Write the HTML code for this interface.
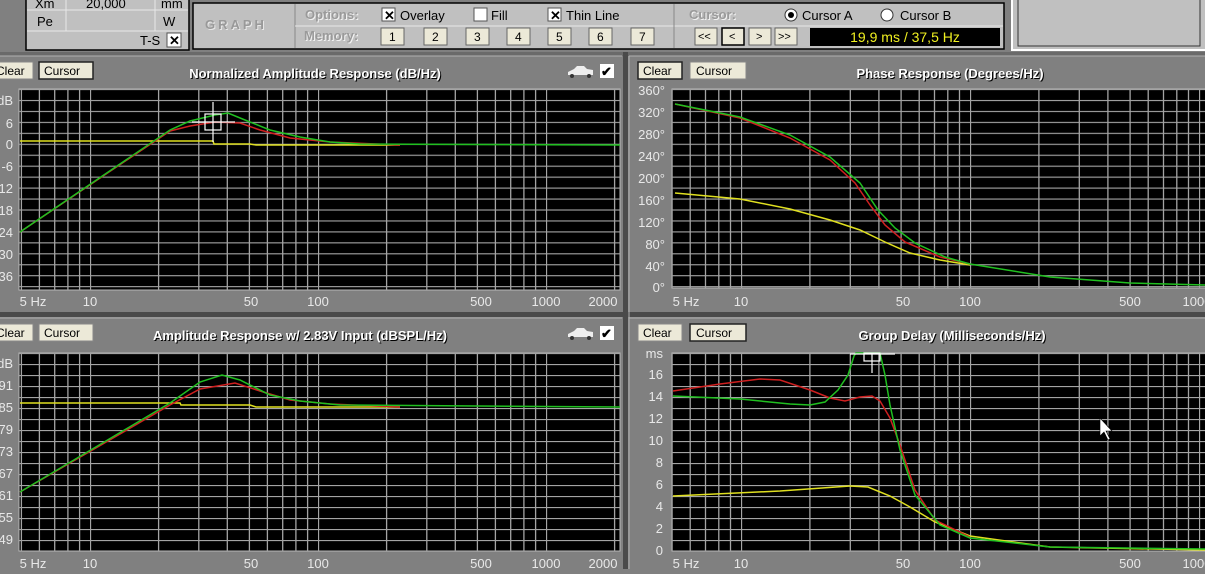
<!DOCTYPE html>
<html><head><meta charset="utf-8"><style>
body{margin:0;width:1205px;height:569px;overflow:hidden;background:#808080;font-family:"Liberation Sans",sans-serif}
</style></head><body>
<svg width="1205" height="569" xmlns="http://www.w3.org/2000/svg" font-family="Liberation Sans, sans-serif">
<defs>
<pattern id="gl" x="90" y="0" width="228" height="569" patternUnits="userSpaceOnUse">
<g stroke="#a4a4a4" stroke-width="1.3">
<line x1="0.5" y1="0" x2="0.5" y2="569"/><line x1="68.6" y1="0" x2="68.6" y2="569"/><line x1="108.8" y1="0" x2="108.8" y2="569"/><line x1="137.3" y1="0" x2="137.3" y2="569"/><line x1="159.4" y1="0" x2="159.4" y2="569"/><line x1="177.4" y1="0" x2="177.4" y2="569"/><line x1="192.7" y1="0" x2="192.7" y2="569"/><line x1="205.9" y1="0" x2="205.9" y2="569"/><line x1="217.6" y1="0" x2="217.6" y2="569"/></g></pattern>
<pattern id="gr" x="741" y="0" width="229" height="569" patternUnits="userSpaceOnUse">
<g stroke="#a4a4a4" stroke-width="1.3">
<line x1="0.5" y1="0" x2="0.5" y2="569"/><line x1="68.9" y1="0" x2="68.9" y2="569"/><line x1="109.3" y1="0" x2="109.3" y2="569"/><line x1="137.9" y1="0" x2="137.9" y2="569"/><line x1="160.1" y1="0" x2="160.1" y2="569"/><line x1="178.2" y1="0" x2="178.2" y2="569"/><line x1="193.5" y1="0" x2="193.5" y2="569"/><line x1="206.8" y1="0" x2="206.8" y2="569"/><line x1="218.5" y1="0" x2="218.5" y2="569"/></g></pattern>
<pattern id="h1" x="0" y="89" width="1205" height="10.95" patternUnits="userSpaceOnUse"><line x1="0" y1="0.5" x2="1205" y2="0.5" stroke="#a4a4a4" stroke-width="1.3"/></pattern>
<pattern id="h2" x="0" y="353" width="1205" height="11" patternUnits="userSpaceOnUse"><line x1="0" y1="0.5" x2="1205" y2="0.5" stroke="#a4a4a4" stroke-width="1.3"/></pattern>
</defs>

<!-- toolbar -->
<rect x="0" y="0" width="1205" height="52" fill="#808080"/>
<rect x="26" y="-2" width="163" height="52" fill="#c0c0c0" stroke="#000" stroke-width="1.5"/>
<g stroke="#e8e8e8" stroke-width="1"><line x1="27" y1="10" x2="188" y2="10"/><line x1="27" y1="31" x2="188" y2="31"/><line x1="66" y1="0" x2="66" y2="31"/><line x1="155" y1="0" x2="155" y2="31"/></g>
<g font-size="13" fill="#000"><text x="35" y="8">Xm</text><text x="86" y="8">20,000</text><text x="161" y="8">mm</text><text x="37" y="26">Pe</text><text x="163" y="26">W</text><text x="140" y="45">T-S</text></g>
<rect x="167" y="33" width="14" height="14" fill="#fff" stroke="#555"/><text x="169" y="45" font-size="13" font-weight="bold">✕</text>
<rect x="193" y="3" width="811" height="46" fill="#c0c0c0" stroke="#000" stroke-width="1.5"/>
<line x1="295" y1="4" x2="295" y2="48" stroke="#888"/><line x1="295" y1="26" x2="1003" y2="26" stroke="#e8e8e8"/>
<line x1="674" y1="4" x2="674" y2="48" stroke="#888"/>
<text x="206" y="30" font-size="13" font-weight="bold" fill="#e8e8e8" letter-spacing="3">GRAPH</text>
<text x="205" y="29" font-size="13" font-weight="bold" fill="#999" letter-spacing="3">GRAPH</text>
<g font-size="13" font-weight="bold" fill="#f2f2f2"><text x="306" y="20">Options:</text><text x="305" y="41">Memory:</text><text x="690" y="20">Cursor:</text></g>
<g font-size="13" font-weight="bold" fill="#9a9a9a"><text x="305" y="19">Options:</text><text x="304" y="40">Memory:</text><text x="689" y="19">Cursor:</text></g>
<g font-size="13" fill="#000">
<rect x="382" y="8" width="13" height="13" fill="#fff" stroke="#555"/><text x="384" y="20" font-weight="bold">✕</text><text x="400" y="20">Overlay</text>
<rect x="474" y="8" width="13" height="13" fill="#fff" stroke="#555"/><text x="491" y="20">Fill</text>
<rect x="548" y="8" width="13" height="13" fill="#fff" stroke="#555"/><text x="550" y="20" font-weight="bold">✕</text><text x="566" y="20">Thin Line</text>
<circle cx="791" cy="15" r="6" fill="#fff" stroke="#333"/><circle cx="791" cy="15" r="3" fill="#000"/><text x="802" y="20">Cursor A</text>
<circle cx="887" cy="15" r="6" fill="#fff" stroke="#333"/><text x="900" y="20">Cursor B</text>
</g>
<g font-size="12" fill="#000">
<rect x="381" y="28" width="23" height="17" fill="#ece9d8" stroke="#666"/><text x="389" y="41">1</text>
<rect x="424" y="28" width="23" height="17" fill="#ece9d8" stroke="#666"/><text x="432" y="41">2</text>
<rect x="466" y="28" width="23" height="17" fill="#ece9d8" stroke="#666"/><text x="474" y="41">3</text>
<rect x="507" y="28" width="23" height="17" fill="#ece9d8" stroke="#666"/><text x="515" y="41">4</text>
<rect x="548" y="28" width="23" height="17" fill="#ece9d8" stroke="#666"/><text x="556" y="41">5</text>
<rect x="589" y="28" width="23" height="17" fill="#ece9d8" stroke="#666"/><text x="597" y="41">6</text>
<rect x="631" y="28" width="23" height="17" fill="#ece9d8" stroke="#666"/><text x="639" y="41">7</text>
<rect x="695" y="28" width="22" height="17" fill="#ece9d8" stroke="#666"/><text x="698" y="40" font-size="11">&lt;&lt;</text>
<rect x="722" y="28" width="22" height="17" fill="#ece9d8" stroke="#000" stroke-width="1.5"/><text x="729" y="40" font-size="11">&lt;</text>
<rect x="749" y="28" width="22" height="17" fill="#ece9d8" stroke="#666"/><text x="756" y="40" font-size="11">&gt;</text>
<rect x="775" y="28" width="22" height="17" fill="#ece9d8" stroke="#666"/><text x="778" y="40" font-size="11">&gt;&gt;</text>
</g>
<rect x="810" y="28" width="190" height="18" fill="#000"/>
<text x="905" y="42" font-size="14" fill="#f0f020" text-anchor="middle">19,9 ms / 37,5 Hz</text>
<rect x="1012" y="-2" width="194" height="52" fill="#c0c0c0" stroke="#fff" stroke-width="2"/>
<rect x="1018" y="-2" width="182" height="48" fill="#c0c0c0" stroke="#333"/>

<!-- panel frames -->
<rect x="0" y="52" width="1205" height="4" fill="#6a6a6a"/>
<rect x="623" y="52" width="5" height="517" fill="#4a4a4a"/>
<rect x="0" y="312" width="1205" height="5" fill="#4a4a4a"/>
<line x1="0" y1="56" x2="622" y2="56" stroke="#b0b0b0"/><line x1="629" y1="56" x2="1205" y2="56" stroke="#b0b0b0"/>
<line x1="0" y1="318" x2="622" y2="318" stroke="#b0b0b0"/><line x1="629" y1="318" x2="1205" y2="318" stroke="#b0b0b0"/>
<line x1="629" y1="56" x2="629" y2="569" stroke="#b0b0b0"/>

<!-- plot backgrounds -->
<rect x="19" y="89" width="601" height="201" fill="#000" stroke="#b8b8b8"/>
<rect x="19" y="89" width="601" height="201" fill="url(#gl)"/><rect x="19" y="89" width="601" height="201" fill="url(#h1)"/>
<rect x="19" y="353" width="601" height="198" fill="#000" stroke="#b8b8b8"/>
<rect x="19" y="353" width="601" height="198" fill="url(#gl)"/><rect x="19" y="353" width="601" height="198" fill="url(#h2)"/>
<rect x="672" y="89" width="540" height="199" fill="#000" stroke="#b8b8b8"/>
<rect x="672" y="89" width="533" height="199" fill="url(#gr)"/><rect x="672" y="89" width="533" height="199" fill="url(#h1)"/>
<rect x="672" y="353" width="540" height="198" fill="#000" stroke="#b8b8b8"/>
<rect x="672" y="353" width="533" height="198" fill="url(#gr)"/><rect x="672" y="353" width="533" height="198" fill="url(#h2)"/>

<!-- headers -->
<g font-size="12" fill="#000">
<rect x="-6" y="62" width="39" height="17" fill="#ece9d8" stroke="#888"/><text x="-4" y="75">Clear</text>
<rect x="39" y="62" width="54" height="17" fill="#ece9d8" stroke="#222" stroke-width="1.5"/><text x="44" y="75">Cursor</text>
<rect x="638" y="62" width="44" height="17" fill="#ece9d8" stroke="#222" stroke-width="1.5"/><text x="643" y="75">Clear</text>
<rect x="690" y="62" width="56" height="17" fill="#ece9d8" stroke="#888"/><text x="696" y="75">Cursor</text>
<rect x="-6" y="324" width="39" height="17" fill="#ece9d8" stroke="#888"/><text x="-4" y="337">Clear</text>
<rect x="39" y="324" width="54" height="17" fill="#ece9d8" stroke="#888"/><text x="44" y="337">Cursor</text>
<rect x="638" y="324" width="44" height="17" fill="#ece9d8" stroke="#888"/><text x="643" y="337">Clear</text>
<rect x="690" y="324" width="56" height="17" fill="#ece9d8" stroke="#222" stroke-width="1.5"/><text x="696" y="337">Cursor</text>
</g>
<g font-size="13" font-weight="bold" text-anchor="middle">
<g fill="#000" transform="translate(1,1)"><text x="315" y="78">Normalized Amplitude Response (dB/Hz)</text><text x="950" y="78">Phase Response (Degrees/Hz)</text><text x="300" y="340">Amplitude Response w/ 2.83V Input (dBSPL/Hz)</text><text x="952" y="340">Group Delay (Milliseconds/Hz)</text></g>
<g fill="#fff"><text x="315" y="78">Normalized Amplitude Response (dB/Hz)</text><text x="950" y="78">Phase Response (Degrees/Hz)</text><text x="300" y="340">Amplitude Response w/ 2.83V Input (dBSPL/Hz)</text><text x="952" y="340">Group Delay (Milliseconds/Hz)</text></g>
</g>
<g fill="#eee">
<path d="M568,72 L574,69 L577,66 L584,66 L587,69 L593,70 L593,75 L568,75 Z"/><circle cx="572" cy="76" r="2" fill="#333"/><circle cx="589" cy="76" r="2" fill="#333"/>
<path d="M568,334 L574,331 L577,328 L584,328 L587,331 L593,332 L593,337 L568,337 Z"/><circle cx="572" cy="338" r="2" fill="#333"/><circle cx="589" cy="338" r="2" fill="#333"/>
</g>
<rect x="600" y="64" width="14" height="14" fill="#fff"/><text x="601" y="76" font-size="13" font-weight="bold">✔</text>
<rect x="600" y="326" width="14" height="14" fill="#fff"/><text x="601" y="338" font-size="13" font-weight="bold">✔</text>

<!-- axis labels -->
<g font-size="13" fill="#e8e8e8">
<g text-anchor="end"><text x="13" y="105">dB</text><text x="13" y="128">6</text><text x="13" y="149">0</text><text x="13" y="171">-6</text><text x="13" y="193">-12</text><text x="13" y="215">-18</text><text x="13" y="237">-24</text><text x="13" y="259">-30</text><text x="13" y="281">-36</text>
<text x="13" y="368">dB</text><text x="13" y="390">91</text><text x="13" y="412">85</text><text x="13" y="434">79</text><text x="13" y="456">73</text><text x="13" y="478">67</text><text x="13" y="500">61</text><text x="13" y="522">55</text><text x="13" y="544">49</text>
<text x="665" y="95">360°</text><text x="665" y="117">320°</text><text x="665" y="139">280°</text><text x="665" y="161">240°</text><text x="665" y="183">200°</text><text x="665" y="205">160°</text><text x="665" y="227">120°</text><text x="665" y="249">80°</text><text x="665" y="271">40°</text><text x="665" y="292">0°</text>
<text x="663" y="358">ms</text><text x="663" y="379">16</text><text x="663" y="401">14</text><text x="663" y="423">12</text><text x="663" y="445">10</text><text x="663" y="467">8</text><text x="663" y="489">6</text><text x="663" y="511">4</text><text x="663" y="533">2</text><text x="663" y="555">0</text></g>
<g text-anchor="middle"><text x="33" y="306">5 Hz</text><text x="90" y="306">10</text><text x="251" y="306">50</text><text x="318" y="306">100</text><text x="481" y="306">500</text><text x="546" y="306">1000</text><text x="603" y="306">2000</text>
<text x="33" y="568">5 Hz</text><text x="90" y="568">10</text><text x="251" y="568">50</text><text x="318" y="568">100</text><text x="481" y="568">500</text><text x="546" y="568">1000</text><text x="603" y="568">2000</text>
<text x="686" y="306">5 Hz</text><text x="741" y="306">10</text><text x="903" y="306">50</text><text x="970" y="306">100</text><text x="1130" y="306">500</text><text x="1197" y="306">1000</text>
<text x="686" y="568">5 Hz</text><text x="741" y="568">10</text><text x="903" y="568">50</text><text x="970" y="568">100</text><text x="1130" y="568">500</text><text x="1197" y="568">1000</text></g>
</g>

<!-- curves -->
<g fill="none" stroke-width="1.5">
<polyline stroke="#e0e020" points="20,141 213,141 214,144 250,144 256,145 400,145"/>
<polyline stroke="#d02020" points="20,232 170,131 190,126 215,122 240,123 260,130 290,138 330,142 400,145"/>
<polyline stroke="#20c020" points="20,232 170,130 190,121 215,115 228,113 245,120 270,130 300,137 330,142 360,144 620,145"/>
<polyline stroke="#e0e020" points="20,403 180,403 181,405 250,405 256,407 400,407"/>
<polyline stroke="#d02020" points="20,492 170,405 200,389 235,383 260,391 290,400 330,404 400,407"/>
<polyline stroke="#20c020" points="20,492 170,403 200,382 222,375 240,380 270,395 300,401 340,405 620,407"/>
<polyline stroke="#e0e020" points="675,193 740,199 790,209 830,220 860,230 885,242 910,253 940,260 970,265"/>
<polyline stroke="#d02020" points="675,104 740,118 790,138 830,160 855,183 870,205 885,225 905,242 940,257 970,264"/>
<polyline stroke="#20c020" points="675,104 740,117 790,135 830,157 860,183 878,210 895,228 915,243 945,257 970,264 1050,277 1130,283 1205,285"/>
<polyline stroke="#e0e020" points="673,496 780,491 850,486 868,487 890,496 910,507 935,522 970,536 1050,547 1205,550"/>
<polyline stroke="#d02020" points="673,391 720,384 760,379 780,380 810,390 830,398 845,401 860,397 872,396 880,401 890,418 900,445 915,490 935,520 970,537"/>
<polyline stroke="#20c020" points="673,396 740,399 790,404 810,405 825,402 838,390 848,375 854,356 856,353 880,353 885,375 890,405 900,450 915,495 940,525 970,538 1050,547 1205,549"/>
</g>
<!-- cursors -->
<g stroke="#fff" fill="none" stroke-width="1.2">
<line x1="213" y1="102" x2="213" y2="142"/><line x1="192" y1="122" x2="235" y2="122"/><rect x="205" y="114" width="16" height="16"/>
<line x1="872" y1="353" x2="872" y2="373"/><rect x="864" y="353" width="16" height="8"/><line x1="850" y1="354" x2="895" y2="354"/>
</g>
<path d="M1100,418 L1100,436 L1104,432 L1108,440 L1110,439 L1106,431 L1112,431 Z" fill="#fff" stroke="#000" stroke-width="0.6"/>
</svg>
</body></html>
